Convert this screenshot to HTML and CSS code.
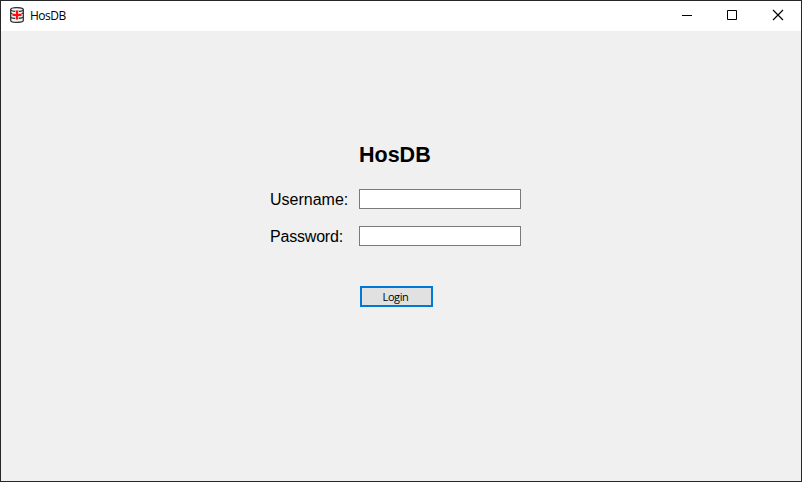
FILE: index.html
```html
<!DOCTYPE html>
<html lang="en">
<head>
<meta charset="utf-8">
<title>HosDB</title>
<link rel="stylesheet" href="styles.css">
</head>
<body>
<div class="window">
  <header class="titlebar">
    <svg class="app-icon" width="16" height="16" viewBox="0 0 16 16">
      <path class="drum" d="M1.700 2.500v11c0 1.200 2.500 1.900 6.300 1.900s6.300-.7 6.300-1.900v-11"/>
      <ellipse class="drum" cx="8" cy="2.500" rx="6.300" ry="1.900"/>
      <path class="band" d="M1.700 5.500c0 1 2.500 1.700 6.300 1.700s6.300-.7 6.300-1.700M1.700 9.700c0 1 2.500 1.700 6.300 1.700s6.300-.7 6.300-1.700"/>
      <path class="halo" d="M8 3.500v9M3.500 8h9"/>
      <path class="cross" d="M8 3.500v9M3.500 8h9"/>
    </svg>
    <span class="caption">HosDB</span>
    <div class="controls">
      <span class="control"><svg width="10" height="10" viewBox="0 0 10 10"><path d="M0 5.500h10"/></svg></span>
      <span class="control"><svg width="10" height="10" viewBox="0 0 10 10"><path d="M.5.5h9v9h-9z"/></svg></span>
      <span class="control"><svg width="10" height="10" viewBox="0 0 10 10"><path class="close" d="M0 0l10 10M10 0L0 10"/></svg></span>
    </div>
  </header>
  <main class="content">
    <form class="login">
      <h1 class="heading">HosDB</h1>
      <label class="label" for="user">Username:</label>
      <input class="field" id="user" type="text">
      <label class="label label-password" for="pass">Password:</label>
      <input class="field" id="pass" type="password">
      <button class="submit" type="button">Login</button>
    </form>
  </main>
</div>
</body>
</html>
```
FILE: styles.css
```css
* { box-sizing: border-box; }
body {
  margin: 0;
  color: #000;
  font-family: "Liberation Sans", Arial, sans-serif;
}
.window {
  display: flex;
  flex-direction: column;
  width: 802px;
  height: 482px;
  border: 1px solid #272729;
  background: #f0f0f0;
}
.titlebar {
  display: flex;
  align-items: center;
  height: 30px;
  padding-left: 8px;
  background: #fff;
}
.app-icon { display: block; margin-top: -2px; }
.drum { fill: #f4f4f4; stroke: #333; stroke-width: 1.3; }
.band { fill: none; stroke: #333; stroke-width: 1.2; }
.halo { stroke: #f4e4e4; stroke-width: 3.6; }
.cross { stroke: #ff0d12; stroke-width: 2.2; }
.caption {
  margin-left: 5px;
  font: 12px/16px "Open Sans", "Noto Sans", sans-serif;
  letter-spacing: -0.5px;
}
.controls { display: flex; margin-left: auto; }
.control {
  display: flex;
  align-items: center;
  justify-content: center;
  width: 46px;
  height: 30px;
  padding-bottom: 2px;
}
.control:first-child { width: 45px; }
.control svg { display: block; overflow: visible; fill: none; stroke: #000; }
.close { stroke-width: 1.2; }
.content { padding: 111px 0 0 269px; }
.login {
  display: grid;
  grid-template-columns: 89px 162px;
  grid-template-rows: 47px 37px 60px 21px;
}
.heading {
  grid-column: 2;
  margin: 0;
  padding-top: 1px;
  font-size: 21.500px;
  line-height: 25px;
}
.label { padding-top: 1px; font-size: 16px; line-height: 20px; }
.label-password { letter-spacing: -0.2px; }
.field {
  width: 162px;
  height: 20px;
  padding: 1px 4px;
  border: 1px solid #7a7a7a;
  border-radius: 0;
  background: #fff;
  outline: none;
}
.submit {
  grid-column: 2;
  width: 73px;
  height: 21px;
  margin-left: 1px;
  padding: 0 2px 0 0;
  border: 2px solid #0078d7;
  border-radius: 0;
  background: #e1e1e1;
  color: #000;
  font: 11px/16px "Open Sans", "Noto Sans", sans-serif;
  letter-spacing: -0.4px;
}
```
